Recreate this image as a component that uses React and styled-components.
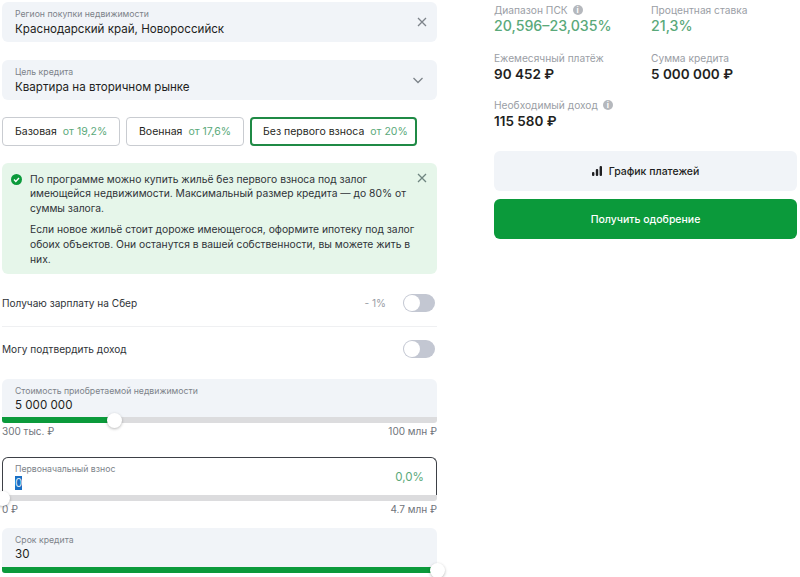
import React from 'react';
import styled, { createGlobalStyle } from 'styled-components';

const Global = createGlobalStyle`
    html, body {
        margin: 0;
        height: 577px;
        overflow: hidden;
        background: #fff;
    }
    body {
        font-family: Inter, "Noto Sans", sans-serif;
        color: #1f1f22;
    }
`;

const Page = styled.div`
    display: flex;
    align-items: flex-start;
    gap: 57px;
    padding: 2px 3px 0 2px;
    width: 800px;
    height: 577px;
    box-sizing: border-box;
    overflow: hidden;
`;

const LeftColumn = styled.div`
    width: 435px;
    flex: none;
    display: flex;
    flex-direction: column;
`;

const RightColumn = styled.div`
    flex: 1;
    margin-top: 1px;
    display: flex;
    flex-direction: column;
`;

const Field = styled.div`
    position: relative;
    height: 40px;
    box-sizing: border-box;
    padding: 6px 12px 0 13px;
    margin-bottom: ${(props) => props.$mb || 0}px;
    border-radius: 6px;
    background: #f1f4f8;
    display: flex;
    flex-direction: column;
    gap: 1px;
`;

const FieldLabel = styled.div`
    font-size: 8.7px;
    line-height: 12px;
    color: #7d838a;
`;

const FieldValue = styled.div`
    font-size: 11.6px;
    line-height: 17px;
    color: #1f1f22;
`;

const FieldIcon = styled.div`
    position: absolute;
    right: ${(props) => props.$right}px;
    top: 13px;
    line-height: 0;
    color: #7d838a;
`;

const Chips = styled.div`
    display: flex;
    gap: 6px;
    margin-bottom: 17px;
`;

const Chip = styled.div`
    height: 29px;
    box-sizing: border-box;
    display: flex;
    align-items: center;
    gap: 6px;
    padding: 0 ${(props) => (props.$active ? 11 : 12)}px;
    width: ${(props) => props.$width}px;
    border-radius: 4px;
    border: ${(props) => (props.$active ? '2px solid #1f8a45' : '1px solid #c9ccd1')};
    font-size: 10.5px;
    white-space: nowrap;
`;

const Green = styled.span`
    color: #5aa97a;
`;

const Alert = styled.div`
    position: relative;
    height: 111px;
    box-sizing: border-box;
    padding: 8.5px 20px 0 28px;
    border-radius: 6px;
    background: #e6f6ea;
    font-size: 10.3px;
    line-height: 14.7px;
    color: #2f3338;
`;

const AlertText = styled.p`
    margin: 0 0 6.5px;
`;

const AlertCheck = styled.div`
    position: absolute;
    left: 9px;
    top: 11px;
    line-height: 0;
`;

const AlertClose = styled.div`
    position: absolute;
    right: 8px;
    top: 8px;
    line-height: 0;
    color: #6f8580;
`;

const OptionRow = styled.div`
    height: ${(props) => props.$height}px;
    padding-top: ${(props) => props.$top || 0}px;
    margin-bottom: ${(props) => props.$mb || 0}px;
    display: flex;
    align-items: center;
    font-size: 10.1px;
    color: #2f3338;
    border-bottom: ${(props) => (props.$line ? '1px solid #eff0f2' : 'none')};
    box-sizing: border-box;
`;

const OptionLabel = styled.div`
    flex: 1;
`;

const Discount = styled.div`
    color: #9a9ea5;
    margin-right: 17px;
`;

const Switch = styled.div`
    width: 32px;
    height: 18px;
    margin-right: 2px;
    border-radius: 9px;
    background: #c3c7d2;
    position: relative;
    &::after {
        content: '';
        position: absolute;
        left: 1px;
        top: 1px;
        width: 16px;
        height: 16px;
        border-radius: 50%;
        background: #fff;
    }
`;

const SliderBlock = styled.div`
    margin-bottom: ${(props) => props.$mb || 0}px;
`;

const SliderTop = styled.div`
    position: relative;
    height: ${(props) => props.$height}px;
    box-sizing: border-box;
    padding: ${(props) => (props.$focus ? '5px 12px 0 12px' : '6px 12px 0 13px')};
    background: ${(props) => (props.$focus ? '#fff' : '#f1f4f8')};
    border: ${(props) => (props.$focus ? '1px solid #3d4046' : 'none')};
    border-bottom: none;
    border-radius: 6px 6px 0 0;
`;

const Percent = styled.div`
    position: absolute;
    right: 12px;
    top: 11px;
    font-size: 11.6px;
    line-height: 16px;
    color: #5aa97a;
`;

const Selected = styled.span`
    background: #1a6fc4;
    color: #d5e6f5;
`;

const Track = styled.div`
    position: relative;
    height: 6px;
    border-radius: 0 0 3px 3px;
    background: #dcdcde;
`;

const Fill = styled.div`
    height: 100%;
    border-radius: 0 0 0 3px;
    background: #0b9a3b;
`;

const Thumb = styled.div`
    position: absolute;
    top: -4px;
    width: 15px;
    height: 15px;
    margin-left: -7.5px;
    border-radius: 50%;
    background: #fff;
    box-shadow: 0 1px 3px rgba(0, 0, 0, 0.28);
`;

const Limits = styled.div`
    display: flex;
    justify-content: space-between;
    margin-top: 1px;
    font-size: 10px;
    line-height: 14px;
    color: #6f747b;
`;

const Stats = styled.div`
    display: grid;
    grid-template-columns: 157px 1fr;
    grid-auto-rows: 47.5px;
    margin-bottom: 5.5px;
`;

const StatLabel = styled.div`
    display: flex;
    align-items: center;
    gap: 5px;
    font-size: 10.2px;
    line-height: 14px;
    color: #9a9ea5;
`;

const StatValue = styled.div`
    font-size: ${(props) => (props.$green ? 14.2 : 13.5)}px;
    line-height: 18px;
    font-weight: ${(props) => (props.$green ? 500 : 600)};
    color: ${(props) => (props.$green ? '#5aa97a' : '#1f1f22')};
`;

const InfoDot = styled.span`
    width: 10px;
    height: 10px;
    border-radius: 50%;
    background: #b5b8bd;
    color: #fff;
    font-size: 8px;
    line-height: 10px;
    font-weight: 700;
    text-align: center;
`;

const Button = styled.div`
    height: 40px;
    margin-bottom: 8px;
    border-radius: 6px;
    display: flex;
    align-items: center;
    justify-content: center;
    gap: 6px;
    font-size: 10.5px;
    font-weight: 500;
    background: ${(props) => (props.$primary ? '#0b9a3b' : '#f1f4f8')};
    color: ${(props) => (props.$primary ? '#fff' : '#1f1f22')};
`;

const Cross = () => (
    <svg width="14" height="14" viewBox="0 0 14 14" fill="none" stroke="currentColor" strokeWidth="1.3">
        <path d="M3 3l8 8M11 3l-8 8" />
    </svg>
);

const Chevron = () => (
    <svg width="14" height="14" viewBox="0 0 14 14" fill="none" stroke="currentColor" strokeWidth="1.3">
        <path d="M2.5 5l4.5 4.5L11.5 5" />
    </svg>
);

const Check = () => (
    <svg width="11" height="11" viewBox="0 0 11 11">
        <circle cx="5.5" cy="5.5" r="5.5" fill="#0b9a3b" />
        <path d="M3 5.6l1.8 1.8L8 4" fill="none" stroke="#fff" strokeWidth="1.4" />
    </svg>
);

const Bars = () => (
    <svg width="11" height="10" viewBox="0 0 11 10" fill="#1f1f22">
        <rect x="0" y="6" width="2.4" height="4" rx="1" />
        <rect x="3.8" y="3" width="2.4" height="7" rx="1" />
        <rect x="7.6" y="0" width="2.4" height="10" rx="1" />
    </svg>
);

const Slider = ({ label, value, percent, focus, min, max, mb, height = 38 }) => (
    <SliderBlock $mb={mb}>
        <SliderTop $focus={focus} $height={height}>
            <FieldLabel>{label}</FieldLabel>
            <FieldValue>{value}</FieldValue>
            {focus && <Percent>0,0%</Percent>}
        </SliderTop>
        <Track>
            <Fill style={{ width: `${percent}%` }} />
            <Thumb style={{ left: `${percent}%` }} />
        </Track>
        {min && (
            <Limits>
                <span>{min}</span>
                <span>{max}</span>
            </Limits>
        )}
    </SliderBlock>
);

const App = () => (
    <Page>
        <Global />
        <LeftColumn>
            <Field $mb={18}>
                <FieldLabel>Регион покупки недвижимости</FieldLabel>
                <FieldValue>Краснодарский край, Новороссийск</FieldValue>
                <FieldIcon $right={8}><Cross /></FieldIcon>
            </Field>
            <Field $mb={17}>
                <FieldLabel>Цель кредита</FieldLabel>
                <FieldValue>Квартира на вторичном рынке</FieldValue>
                <FieldIcon $right={12}><Chevron /></FieldIcon>
            </Field>
            <Chips>
                <Chip $width={118}>Базовая <Green>от 19,2%</Green></Chip>
                <Chip $width={118}>Военная <Green>от 17,6%</Green></Chip>
                <Chip $width={167} $active>Без первого взноса <Green>от 20%</Green></Chip>
            </Chips>
            <Alert>
                <AlertCheck><Check /></AlertCheck>
                <AlertClose><Cross /></AlertClose>
                <AlertText>
                    По программе можно купить жильё без первого взноса под залог имеющейся недвижимости.
                    Максимальный размер кредита — до 80% от суммы залога.
                </AlertText>
                <AlertText>
                    Если новое жильё стоит дороже имеющегося, оформите ипотеку под залог обоих объектов.
                    Они останутся в вашей собственности, вы можете жить в них.
                </AlertText>
            </Alert>
            <OptionRow $height={53} $top={6} $line>
                <OptionLabel>Получаю зарплату на Сбер</OptionLabel>
                <Discount>- 1%</Discount>
                <Switch />
            </OptionRow>
            <OptionRow $height={44} $mb={8}>
                <OptionLabel>Могу подтвердить доход</OptionLabel>
                <Switch />
            </OptionRow>
            <Slider label="Стоимость приобретаемой недвижимости" value="5 000 000" percent={25.9} min="300 тыс. ₽" max="100 млн ₽" mb={19} />
            <Slider label="Первоначальный взнос" value={<Selected>0</Selected>} percent={0} focus min="0 ₽" max="4.7 млн ₽" mb={12} />
            <Slider label="Срок кредита" value="30" percent={100} height={39} />
        </LeftColumn>
        <RightColumn>
            <Stats>
                <div>
                    <StatLabel>Диапазон ПСК <InfoDot>i</InfoDot></StatLabel>
                    <StatValue $green>20,596–23,035%</StatValue>
                </div>
                <div>
                    <StatLabel>Процентная ставка</StatLabel>
                    <StatValue $green>21,3%</StatValue>
                </div>
                <div>
                    <StatLabel>Ежемесячный платёж</StatLabel>
                    <StatValue>90 452 ₽</StatValue>
                </div>
                <div>
                    <StatLabel>Сумма кредита</StatLabel>
                    <StatValue>5 000 000 ₽</StatValue>
                </div>
                <div>
                    <StatLabel>Необходимый доход <InfoDot>i</InfoDot></StatLabel>
                    <StatValue>115 580 ₽</StatValue>
                </div>
            </Stats>
            <Button><Bars />График платежей</Button>
            <Button $primary>Получить одобрение</Button>
        </RightColumn>
    </Page>
);

export default App;
